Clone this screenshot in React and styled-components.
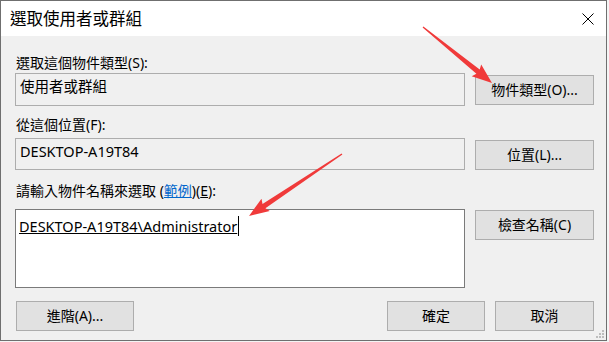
import React from 'react';
import styled, { createGlobalStyle } from 'styled-components';

const GlobalStyle = createGlobalStyle`
  html, body {
    margin: 0;
    padding: 0;
    background: #f4f4f4;
  }
  body {
    font-family: "Noto Sans", "Noto Sans CJK TC", sans-serif;
    color: #000;
  }
`;

const Window = styled.div`
  position: relative;
  width: 607px;
  height: 341px;
  box-sizing: border-box;
  border: 1px solid #6f6f6f;
  background: #f0f0f0;
  display: flex;
  flex-direction: column;
`;

const TitleBar = styled.div`
  height: 35px;
  background: #fff;
  display: flex;
  align-items: center;
  justify-content: space-between;
  padding: 0 12px 0 9px;
`;

const Title = styled.div`
  font-size: 16.5px;
  line-height: 20px;
  padding-top: 1px;
`;

const Body = styled.div`
  padding: 18px 12px 0 14px;
`;

const Form = styled.div`
  display: grid;
  grid-template-columns: 450px 119px;
  column-gap: 10px;
  align-items: start;
`;

const Label = styled.div`
  grid-column: 1 / -1;
  font-size: 14px;
  line-height: 18px;
  padding-left: 1px;
  margin-top: ${p => p.$top || 0}px;
  margin-bottom: ${p => p.$bottom || 0}px;
`;

const Key = styled.span`
  text-decoration: underline;
`;

const Link = styled.span`
  color: #0066cc;
  text-decoration: underline;
`;

const Field = styled.div`
  box-sizing: border-box;
  height: ${p => p.$height}px;
  border: 1px solid ${p => (p.$editable ? '#7a7a7a' : '#adadad')};
  background: ${p => (p.$editable ? '#fff' : '#f0f0f0')};
  padding: ${p => (p.$editable ? '7px 3px' : '3px 4px')};
  font-size: 14.5px;
  line-height: 18px;
  white-space: nowrap;
`;

const Typed = styled.span`
  text-decoration: underline;
  border-right: 1px solid #000;
  padding-right: 1px;
`;

const Button = styled.div`
  box-sizing: border-box;
  width: ${p => p.$width || 119}px;
  height: 30px;
  margin-top: ${p => p.$top || 0}px;
  border: 1px solid #adadad;
  background: #e1e1e1;
  display: flex;
  align-items: center;
  justify-content: center;
  font-size: 14px;
  line-height: 18px;
`;

const Footer = styled.div`
  display: flex;
  align-items: center;
  gap: 10px;
  margin-top: 13px;
  padding-left: 1px;
`;

const Spacer = styled.div`
  flex: 1;
`;

const Grip = styled.svg`
  position: absolute;
  right: 2px;
  bottom: 2px;
`;

const Overlay = styled.svg`
  position: absolute;
  left: -1px;
  top: -1px;
  pointer-events: none;
`;

function CloseIcon() {
  return (
    <svg width="12" height="12" viewBox="0 0 12 12">
      <path d="M0.5 0.5 L11.5 11.5 M11.5 0.5 L0.5 11.5" stroke="#000" strokeWidth="1" fill="none" />
    </svg>
  );
}

function arrowPoints(tail, tip, headLen, headHalf, shaftHalf, tailHalf) {
  const dx = tip[0] - tail[0];
  const dy = tip[1] - tail[1];
  const len = Math.hypot(dx, dy);
  const ux = dx / len, uy = dy / len;
  const nx = -uy, ny = ux;
  const bx = tip[0] - ux * headLen, by = tip[1] - uy * headLen;
  const pts = [
    [tail[0] + nx * tailHalf, tail[1] + ny * tailHalf],
    [bx + nx * shaftHalf, by + ny * shaftHalf],
    [bx + nx * headHalf - ux * 2, by + ny * headHalf - uy * 2],
    tip,
    [bx - nx * headHalf - ux * 2, by - ny * headHalf - uy * 2],
    [bx - nx * shaftHalf, by - ny * shaftHalf],
    [tail[0] - nx * tailHalf, tail[1] - ny * tailHalf],
  ];
  return pts.map(p => `${p[0].toFixed(1)},${p[1].toFixed(1)}`).join(' ');
}

export default function App() {
  return (
    <>
      <GlobalStyle />
      <Window>
        <TitleBar>
          <Title>選取使用者或群組</Title>
          <CloseIcon />
        </TitleBar>
        <Body>
          <Form>
            <Label $bottom={1}>選取這個物件類型(S):</Label>
            <Field $height={33}>使用者或群組</Field>
            <Button $top={2}>物件類型(O)...</Button>

            <Label $top={10} $bottom={4}>從這個位置(F):</Label>
            <Field $height={32}>DESKTOP-A19T84</Field>
            <Button $top={2}>位置(L)...</Button>

            <Label $top={12} $bottom={9}>
              請輸入物件名稱來選取 (<Link>範例</Link>)(<Key>E</Key>):
            </Label>
            <Field $height={79} $editable>
              <Typed>DESKTOP-A19T84\Administrator</Typed>
            </Field>
            <Button $top={1}>檢查名稱(C)</Button>
          </Form>

          <Footer>
            <Button $width={118}>進階(A)...</Button>
            <Spacer />
            <Button $width={98}>確定</Button>
            <Button $width={99}>取消</Button>
          </Footer>
        </Body>

        <Grip width="9" height="9" viewBox="0 0 9 9">
          {[[7, 1], [7, 4], [4, 4], [7, 7], [4, 7], [1, 7]].map(([x, y]) => (
            <rect key={`${x}-${y}`} x={x} y={y} width="2" height="2" fill="#bdbdbd" />
          ))}
        </Grip>

        <Overlay width="609" height="342">
          <polygon points={arrowPoints([423, 27], [492, 83], 18, 7.5, 2.6, 0.7)} fill="#f03a3a" />
          <polygon points={arrowPoints([342, 154], [249, 216], 18, 7.5, 2.6, 0.7)} fill="#f03a3a" />
        </Overlay>
      </Window>
    </>
  );
}
